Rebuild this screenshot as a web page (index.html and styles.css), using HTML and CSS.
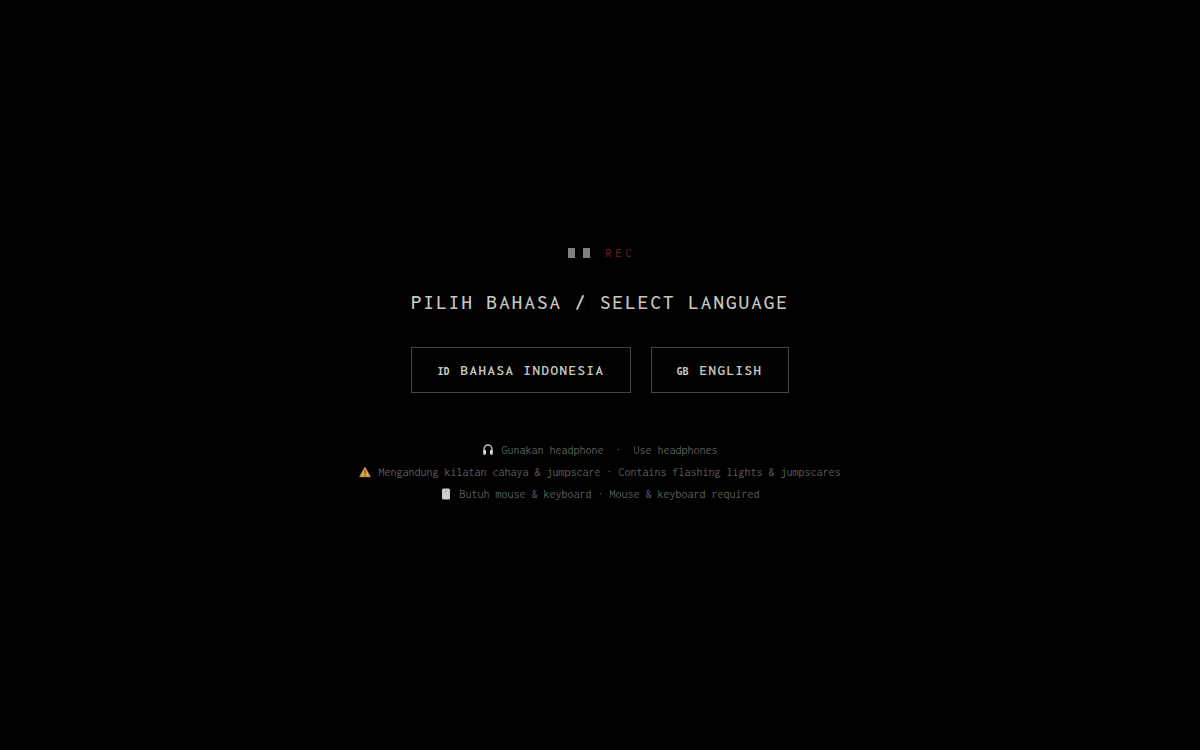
FILE: index.html
```html
<!doctype html>
<html lang="id">
<head>
  <meta charset="utf-8">
  <meta name="viewport" content="width=device-width, initial-scale=1">
  <title>Pilih Bahasa / Select Language</title>
  <link rel="stylesheet" href="styles.css">
</head>

<body>
  <main class="language-screen">
    <div class="rec">
      <span class="rec-block"></span>
      <span class="rec-block"></span>
      <span class="rec-label">REC</span>
    </div>

    <h1 class="title">PILIH BAHASA / SELECT LANGUAGE</h1>

    <div class="languages">
      <button class="language" type="button" lang="id"><span class="code">ID</span>BAHASA INDONESIA</button>
      <button class="language" type="button" lang="en"><span class="code">GB</span>ENGLISH</button>
    </div>

    <div class="notes">
      <p class="note">
        <svg class="icon" viewBox="0 0 12 12" aria-hidden="true">
          <path d="M2 7V5a4 4 0 0 1 8 0V7" fill="none" stroke="#c4c4c4" stroke-width="1.3"/>
          <rect x="1.2" y="5.8" width="2.8" height="5" rx="1.1" fill="#d6d6d6"/>
          <rect x="8" y="5.8" width="2.8" height="5" rx="1.1" fill="#d6d6d6"/>
        </svg>
        <span>Gunakan headphone &nbsp;·&nbsp; Use headphones</span>
      </p>
      <p class="note">
        <svg class="icon" viewBox="0 0 12 12" aria-hidden="true">
          <path d="M6 1.2L11.4 10.8H.6z" fill="#e0a650" stroke="#e0a650" stroke-width=".6" stroke-linejoin="round"/>
          <path d="M5.3 4.2h1.4L6.4 8h-.8z" fill="#4a3928"/>
          <circle cx="6" cy="9.3" r=".7" fill="#4a3928"/>
        </svg>
        <span>Mengandung kilatan cahaya &amp; jumpscare · Contains flashing lights &amp; jumpscares</span>
      </p>
      <p class="note">
        <svg class="icon" viewBox="0 0 12 12" aria-hidden="true">
          <rect x="2" y=".5" width="8" height="11" rx="1.5" fill="#cecece"/>
          <path d="M2.5 5h7" stroke="#b8b8b8" stroke-width=".5"/>
          <rect x="5.4" y="1.8" width="1.2" height="2.4" rx=".6" fill="#9a9a9a"/>
        </svg>
        <span>Butuh mouse &amp; keyboard · Mouse &amp; keyboard required</span>
      </p>
    </div>
  </main>
</body>
</html>
```
FILE: styles.css
```css
* {
  box-sizing: border-box;
}

body {
  margin: 0;
  background: #000;
  color: #c8c8c0;
  font-family: Consolas, Inconsolata, monospace;
}

.language-screen {
  min-height: 100vh;
  display: flex;
  flex-direction: column;
  align-items: center;
  justify-content: center;
}

.rec {
  display: flex;
  align-items: center;
  gap: 8px;
  margin-bottom: 29px;
  font-size: 12px;
  line-height: 16px;
}

.rec-block {
  width: 7px;
  height: 10px;
  background: #808080;
}

.rec-label {
  margin-left: 7px;
  margin-right: -4px;
  color: #7a2229;
  letter-spacing: 4px;
}

.title {
  margin: 0 0 33px;
  font-size: 21px;
  font-weight: 500;
  line-height: 24px;
  letter-spacing: 0.1em;
}

.languages {
  display: flex;
  flex-wrap: wrap;
  justify-content: center;
  gap: 20px;
  margin-bottom: 46px;
}

.language {
  display: flex;
  align-items: baseline;
  gap: 11px;
  padding: 12px 25px;
  border: 1px solid #444;
  background: transparent;
  color: inherit;
  font-family: inherit;
  font-size: 15px;
  font-weight: 600;
  line-height: 20px;
  letter-spacing: 0.1em;
  cursor: pointer;
}

.language:hover {
  border-color: #c8c8c0;
}

.code {
  font-family: 'DejaVu Sans Mono', monospace;
  font-size: 10px;
  font-weight: 700;
  line-height: 12px;
  letter-spacing: 0;
}

.notes {
  color: #5c5c5c;
  font-size: 12px;
  line-height: 22px;
}

.note {
  display: flex;
  align-items: center;
  justify-content: center;
  gap: 7px;
  margin: 0;
}

.icon {
  width: 12px;
  height: 12px;
  flex: none;
}
```
